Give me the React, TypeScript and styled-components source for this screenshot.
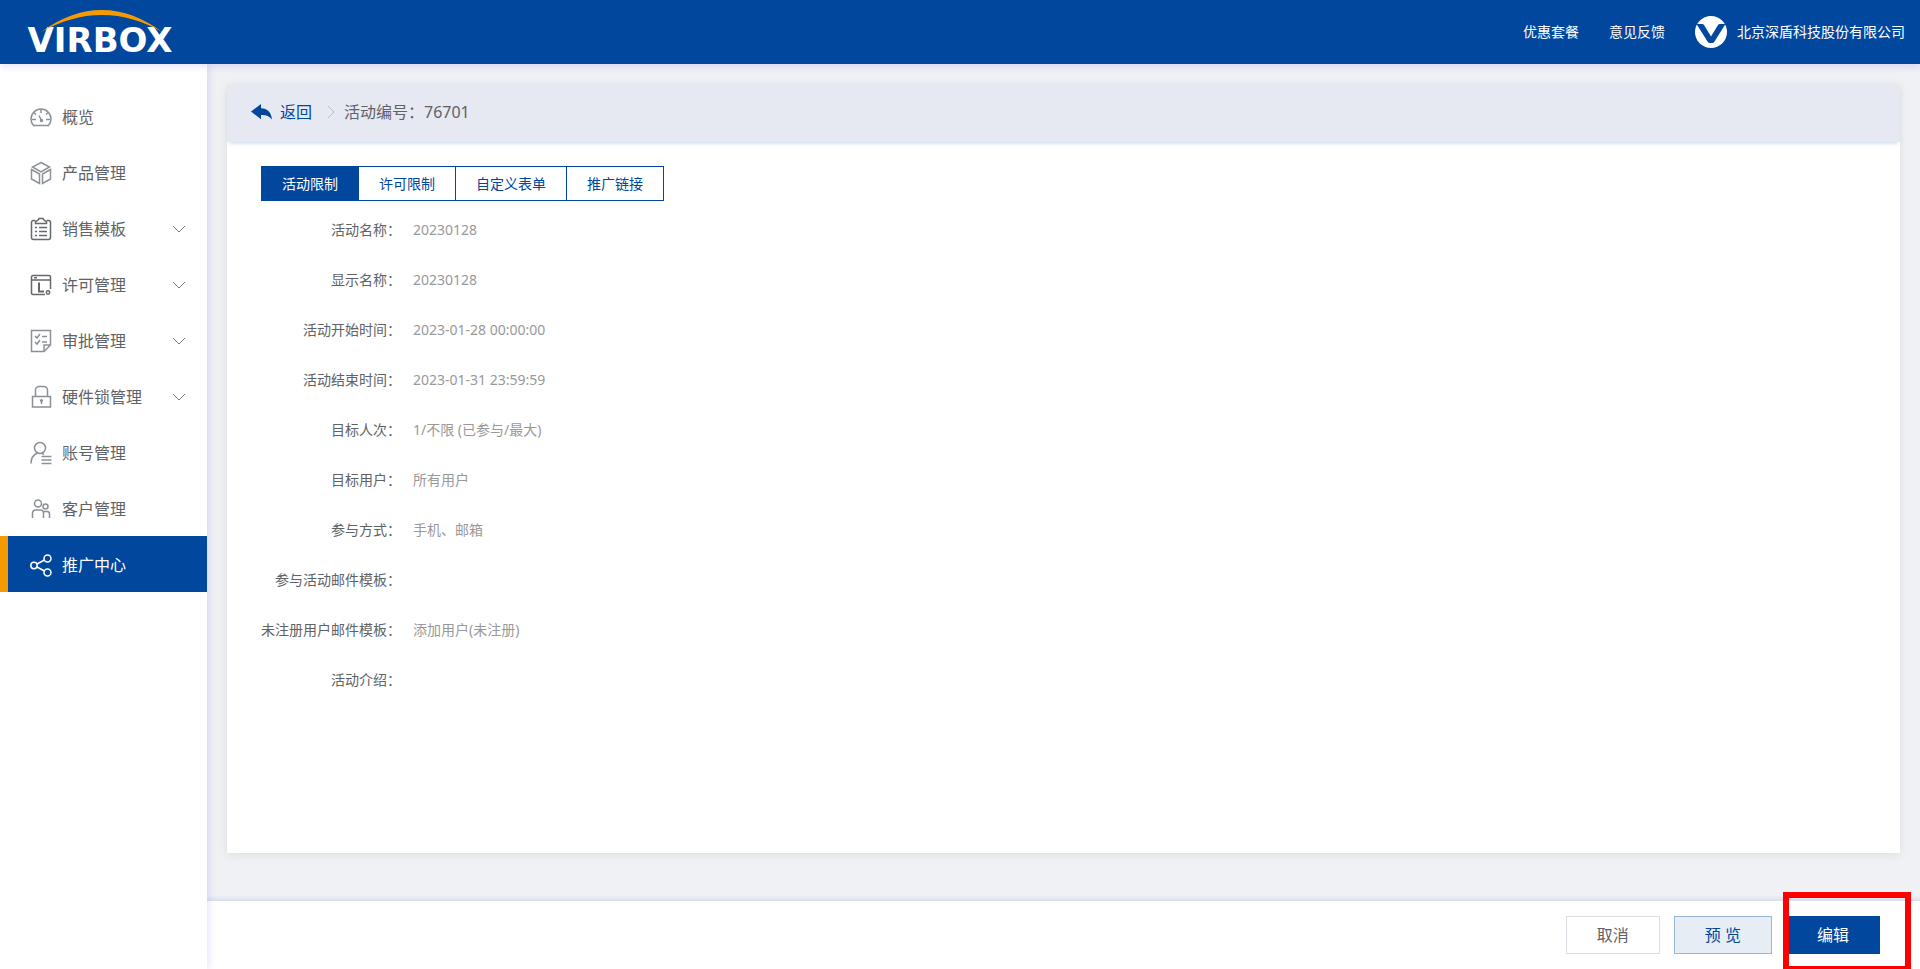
import React, { useState } from "react";
import styled, { createGlobalStyle } from "styled-components";

const blue = "#00479d";

const GlobalStyle = createGlobalStyle`
  *, *::before, *::after { box-sizing: border-box; }
  html, body, #root { height: 100%; }
  body {
    margin: 0;
    overflow: hidden;
    background: #f0f1f5;
    color: #606266;
    font-family: "Noto Sans", "Noto Sans CJK SC", sans-serif;
    font-size: 14px;
    line-height: 20px;
  }
  button { font: inherit; cursor: pointer; border-radius: 0; }
  a { color: inherit; text-decoration: none; }
`;

const Page = styled.div`
  position: relative;
  display: flex;
  flex-direction: column;
  height: 100%;
  overflow: hidden;
`;

const TopBar = styled.header`
  position: relative;
  z-index: 2;
  flex: none;
  display: flex;
  align-items: center;
  justify-content: space-between;
  height: 64px;
  padding: 0 15px 0 24px;
  background: ${blue};
  color: #fff;
  box-shadow: 0 2px 8px rgba(100, 90, 220, 0.2);
`;

const LogoMark = styled.svg`
  display: block;
  width: 154px;
  height: 64px;
`;

const TopLinks = styled.nav`
  display: flex;
  align-items: center;
  gap: 30px;
`;

const Account = styled.a`
  display: flex;
  align-items: center;
  gap: 10px;
`;

const Body = styled.div`
  flex: 1;
  display: flex;
  min-height: 0;
`;

const Sidebar = styled.nav`
  position: relative;
  z-index: 1;
  flex: none;
  width: 207px;
  padding-top: 24px;
  background: #fff;
  box-shadow: 1px 0 8px rgba(100, 90, 220, 0.2);
`;

const MenuItem = styled.a<{ $active?: boolean }>`
  display: flex;
  align-items: center;
  gap: 10px;
  height: 56px;
  padding: 2px 21px 0 22px;
  border-left: 8px solid ${(p) => (p.$active ? "#f59a00" : "transparent")};
  background: ${(p) => (p.$active ? blue : "transparent")};
  color: ${(p) => (p.$active ? "#fff" : "#606266")};
  font-size: 16px;
`;

const MenuText = styled.span`
  flex: 1;
`;

const MenuIcon = styled.svg<{ $tone: string }>`
  display: block;
  flex: none;
  width: 22px;
  height: 24px;
  fill: none;
  stroke: ${(p) => p.$tone};
  stroke-width: 1.5;
`;

const Chevron = styled.svg`
  display: block;
  width: 14px;
  height: 8px;
  fill: none;
  stroke: #777a80;
`;

const Main = styled.main`
  flex: 1;
  display: flex;
  flex-direction: column;
  min-width: 0;
`;

const Scroll = styled.div`
  flex: 1;
  display: flex;
  padding: 20px 20px 47px;
  min-height: 0;
`;

const Card = styled.section`
  flex: 1;
  display: flex;
  flex-direction: column;
  background: #fff;
  box-shadow: 0 2px 10px rgba(0, 0, 0, 0.08);
`;

const CardHead = styled.div`
  flex: none;
  display: flex;
  align-items: center;
  height: 58px;
  padding: 0 24px 2px;
  background: #e6e9f2;
  box-shadow: 0 3px 4px -2px rgba(0, 90, 180, 0.25);
  font-size: 16px;
  line-height: 24px;
`;

const BackLink = styled.a`
  display: flex;
  align-items: center;
  gap: 8px;
  color: ${blue};
`;

const Crumb = styled.svg`
  width: 8px;
  height: 14px;
  margin: 0 9px 0 15px;
  fill: none;
  stroke: #b9bdc8;
`;

const Title = styled.h1`
  margin: 0;
  font-size: 16px;
  font-weight: 400;
`;

const CardBody = styled.div`
  padding: 24px 34px;
`;

const Tabs = styled.div`
  display: flex;
  padding-left: 1px;
`;

const Tab = styled.button<{ $active: boolean }>`
  height: 35px;
  margin-left: -1px;
  padding: 0 20px;
  border: 1px solid ${blue};
  background: ${(p) => (p.$active ? blue : "#fff")};
  color: ${(p) => (p.$active ? "#fff" : blue)};
`;

const Details = styled.dl`
  display: grid;
  grid-template-columns: 140px 1fr;
  column-gap: 12px;
  margin: 4px 0 0;
  line-height: 50px;
`;

const Term = styled.dt`
  text-align: right;
  white-space: nowrap;
`;

const Value = styled.dd`
  margin: 0;
  color: #999;
`;

const Footer = styled.footer`
  flex: none;
  display: flex;
  align-items: center;
  justify-content: flex-end;
  gap: 14px;
  height: 69px;
  padding: 0 40px 0 0;
  border-top: 1px solid #dcdfee;
  background: #fff;
  box-shadow: 0 -1px 4px rgba(60, 70, 180, 0.15);
`;

const looks = {
  plain: { bg: "#fff", border: "#dcdfe6", color: "#606266" },
  soft: { bg: "#e6edf5", border: "#99b5d8", color: blue },
  solid: { bg: blue, border: blue, color: "#fff" },
};

const Action = styled.button<{ $look: keyof typeof looks }>`
  height: 38px;
  min-width: 94px;
  padding: 0 30px;
  border: 1px solid ${(p) => looks[p.$look].border};
  background: ${(p) => looks[p.$look].bg};
  color: ${(p) => looks[p.$look].color};
  font-size: 16px;
`;

const Highlight = styled.div`
  position: absolute;
  z-index: 3;
  right: 9px;
  bottom: -3px;
  width: 128px;
  height: 80px;
  border: 6px solid #f00;
  pointer-events: none;
`;

const gray = "#8c9097";
const dark = "#66686c";

const icons = {
  overview: (
    <MenuIcon $tone={gray} viewBox="0 0 22 24">
      <path d="M3.500 20.500C2 19 1 17 1 14a10 10 0 0 1 20 0c0 3-1 5-2.500 6.500z" />
      <path d="M11 4v4M4 7.500l2 2M18 7.500l-2 2M2 14.500h4M20 14.500h-4M9 10.500l2.500 5" />
      <circle cx="11.500" cy="15.500" r="1" />
    </MenuIcon>
  ),
  product: (
    <MenuIcon $tone={gray} viewBox="0 0 22 24">
      <path d="M11 1.500l8.500 4.500L11 11 2.500 6zM1.500 8.500l8 4.500v9.500l-8-4.500zM20.500 8.500l-8 4.500v9.500l8-4.500z" />
    </MenuIcon>
  ),
  sales: (
    <MenuIcon $tone={dark} viewBox="0 0 22 24">
      <path d="M5.500 3.500h-2a2 2 0 0 0-2 2v15a2 2 0 0 0 2 2h15a2 2 0 0 0 2-2v-15a2 2 0 0 0-2-2h-2" />
      <path d="M5.500 6.500V4.800L8 3l1-1.500h4L14 3l2.500 1.800v1.700z" />
      <path d="M5 10.500h2M9 10.500h8M5 14.500h2M9 14.500h8M5 18.500h2M9 18.500h8" />
    </MenuIcon>
  ),
  license: (
    <MenuIcon $tone={dark} viewBox="0 0 22 24">
      <path d="M15 21.500H3a1.500 1.500 0 0 1-1.500-1.500V4A1.500 1.500 0 0 1 3 2.500h16A1.500 1.500 0 0 1 20.500 4v12M1.500 7h19M4 4.800h3" />
      <path d="M9 9.500v9h5" strokeWidth="2" />
      <circle cx="18" cy="19.500" r="1.700" />
    </MenuIcon>
  ),
  approval: (
    <MenuIcon $tone={gray} viewBox="0 0 22 24">
      <path d="M14 22.500H1.500v-21h19V16zM14 22.500V16h6.500" />
      <path d="M5 7l2 2 3-4M12 7.500h5M5 13l2 2 3-4M12 13h5" />
    </MenuIcon>
  ),
  lock: (
    <MenuIcon $tone={gray} viewBox="0 0 22 24">
      <path d="M2.500 11.500h18v10.500h-18zM5.500 11.500V5A3.500 3.500 0 0 1 9 1.500h5A3.500 3.500 0 0 1 17.500 5v6.500M11.500 15v4" />
      <circle cx="11.500" cy="15.500" r="0.800" />
    </MenuIcon>
  ),
  account: (
    <MenuIcon $tone={gray} viewBox="0 0 22 24">
      <circle cx="10" cy="7" r="5.500" />
      <path d="M1 22.500c0-5 2-8.500 6.500-10.500M12 12.500l2 1M11.500 15.500h10M11.500 19h10M11.500 22.500h10" />
    </MenuIcon>
  ),
  customer: (
    <MenuIcon $tone={gray} viewBox="0 0 22 24">
      <circle cx="8" cy="6.500" r="3.500" />
      <circle cx="15.500" cy="9.500" r="2.500" />
      <path d="M2.500 21v-5a3 3 0 0 1 3-3h5a3 3 0 0 1 3 3v5M14 14.500h3a2.500 2.500 0 0 1 2.500 2.500v4" />
    </MenuIcon>
  ),
  share: (
    <MenuIcon $tone="#fff" viewBox="0 0 22 24">
      <circle cx="4" cy="12.500" r="3.200" />
      <circle cx="17.500" cy="5.500" r="3.500" />
      <circle cx="17.500" cy="19.500" r="3.500" />
      <path d="M7 11l7.500-4M7 14l7.500 4" />
    </MenuIcon>
  ),
};

const menu: { label: string; icon: keyof typeof icons; sub?: boolean; active?: boolean }[] = [
  { label: "概览", icon: "overview" },
  { label: "产品管理", icon: "product" },
  { label: "销售模板", icon: "sales", sub: true },
  { label: "许可管理", icon: "license", sub: true },
  { label: "审批管理", icon: "approval", sub: true },
  { label: "硬件锁管理", icon: "lock", sub: true },
  { label: "账号管理", icon: "account" },
  { label: "客户管理", icon: "customer" },
  { label: "推广中心", icon: "share", active: true },
];

const tabs = ["活动限制", "许可限制", "自定义表单", "推广链接"];

const details = [
  ["活动名称", "20230128"],
  ["显示名称", "20230128"],
  ["活动开始时间", "2023-01-28 00:00:00"],
  ["活动结束时间", "2023-01-31 23:59:59"],
  ["目标人次", "1/不限 (已参与/最大)"],
  ["目标用户", "所有用户"],
  ["参与方式", "手机、邮箱"],
  ["参与活动邮件模板", ""],
  ["未注册用户邮件模板", "添加用户(未注册)"],
  ["活动介绍", ""],
];

export default function App() {
  const [tab, setTab] = useState(0);
  return (
    <>
      <GlobalStyle />
      <Page lang="zh-CN">
        <TopBar>
          <LogoMark viewBox="0 0 154 64" role="img" aria-label="VIRBOX">
            <text x="76" y="52" textAnchor="middle" fontFamily="DejaVu Sans, sans-serif" fontWeight="700" fontSize="34" fill="#fff">
              VIRBOX
            </text>
            <path d="M17 32C38 17 57 10 78 10s42 8 60 22C119 21 99 15 78 15S37 21 17 32z" fill="#f59a00" />
          </LogoMark>
          <TopLinks>
            <a href="#plans">优惠套餐</a>
            <a href="#feedback">意见反馈</a>
            <Account href="#account">
              <svg width="32" height="32" viewBox="0 0 32 32" aria-hidden="true">
                <circle cx="16" cy="16" r="16" fill="#fff" />
                <path d="M1.500 8H7q1.500 0 2.300 1.400L16 20.500l6.700-11.100Q23.500 8 25 8h5.500L19.500 25.500Q18.500 27 17 27h-2q-1.500 0-2.500-1.500z" fill={blue} />
              </svg>
              北京深盾科技股份有限公司
            </Account>
          </TopLinks>
        </TopBar>
        <Body>
          <Sidebar>
            {menu.map((m) => (
              <MenuItem key={m.label} href={"#" + m.icon} $active={m.active}>
                {icons[m.icon]}
                <MenuText>{m.label}</MenuText>
                {m.sub && (
                  <Chevron viewBox="0 0 14 8">
                    <path d="M1 1l6 6 6-6" />
                  </Chevron>
                )}
              </MenuItem>
            ))}
          </Sidebar>
          <Main>
            <Scroll>
              <Card>
                <CardHead>
                  <BackLink href="#back">
                    <svg width="21" height="16" viewBox="0 0 21 16" fill={blue} aria-hidden="true">
                      <path d="M0 7.500L10 0v4.200c6.500.3 10.300 4 11 11.300-2.500-3.200-5.500-4.500-11-4.500v4.300z" />
                    </svg>
                    返回
                  </BackLink>
                  <Crumb viewBox="0 0 8 14">
                    <path d="M1 1l6 6-6 6" />
                  </Crumb>
                  <Title>活动编号：76701</Title>
                </CardHead>
                <CardBody>
                  <Tabs role="tablist">
                    {tabs.map((t, i) => (
                      <Tab key={t} role="tab" aria-selected={i === tab} $active={i === tab} onClick={() => setTab(i)}>
                        {t}
                      </Tab>
                    ))}
                  </Tabs>
                  <Details>
                    {details.map(([k, v]) => (
                      <React.Fragment key={k}>
                        <Term>{k}：</Term>
                        <Value>{v}</Value>
                      </React.Fragment>
                    ))}
                  </Details>
                </CardBody>
              </Card>
            </Scroll>
            <Footer>
              <Action $look="plain">取消</Action>
              <Action $look="soft">预 览</Action>
              <Action $look="solid">编辑</Action>
            </Footer>
          </Main>
        </Body>
        <Highlight />
      </Page>
    </>
  );
}
